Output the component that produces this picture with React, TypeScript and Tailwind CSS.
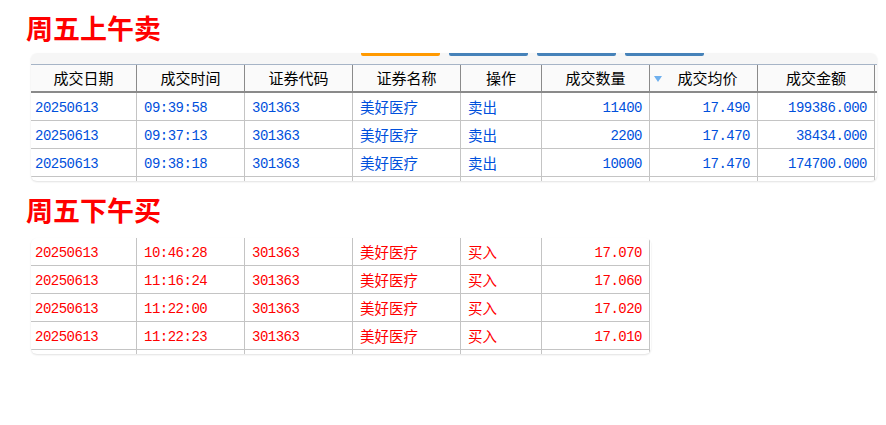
const cjk = { fontFamily: '"Noto Sans CJK SC", "Noto Sans", sans-serif' };
const mono = { fontFamily: '"Liberation Mono", "DejaVu Sans Mono", monospace' };

const cols1 = "grid-cols-[106px_108px_108px_108px_81px_108px_108px_117px]";
const cols2 = "grid-cols-[106px_108px_108px_108px_81px_108px]";

const headers = ["成交日期", "成交时间", "证券代码", "证券名称", "操作", "成交数量", "成交均价", "成交金额"];

type Row = string[];

const sells: Row[] = [
  ["20250613", "09:39:58", "301363", "美好医疗", "卖出", "11400", "17.490", "199386.000"],
  ["20250613", "09:37:13", "301363", "美好医疗", "卖出", "2200", "17.470", "38434.000"],
  ["20250613", "09:38:18", "301363", "美好医疗", "卖出", "10000", "17.470", "174700.000"],
];

const buys: Row[] = [
  ["20250613", "10:46:28", "301363", "美好医疗", "买入", "17.070"],
  ["20250613", "11:16:24", "301363", "美好医疗", "买入", "17.060"],
  ["20250613", "11:22:00", "301363", "美好医疗", "买入", "17.020"],
  ["20250613", "11:22:23", "301363", "美好医疗", "买入", "17.010"],
];

function Title({ text }: { text: string }) {
  return (
    <h1 className="pl-[26px] text-[27px] leading-[27px] font-bold text-[#ff0000]" style={cjk}>
      {text}
    </h1>
  );
}

function Cell({ value, idx, color }: { value: string; idx: number; color: string }) {
  const isCjk = idx === 3 || idx === 4;
  const right = idx >= 5;
  return (
    <div
      className={`h-[28px] border-r border-b border-[#c4c4c4] flex items-center ${color} ${
        right ? "justify-end pr-[7px]" : idx === 0 ? "pl-[4px]" : "pl-[7px]"
      } ${isCjk ? "text-[14.5px] pt-[1px]" : "text-[14px] tracking-[-0.5px] pt-[3px]"}`}
      style={isCjk ? cjk : mono}
    >
      {value}
    </div>
  );
}

function Stub({ n }: { n: number }) {
  return (
    <>
      {Array.from({ length: n }).map((_, i) => (
        <div key={i} className="h-[4px] border-r border-[#c4c4c4]" />
      ))}
    </>
  );
}

export default function App() {
  return (
    <div className="w-[886px] h-[425px] bg-white overflow-hidden pt-[14px]">
      <Title text="周五上午卖" />

      {/* sell table */}
      <div className="mt-[12px] ml-[31px] w-[846px] rounded-[6px] shadow-[0_1px_2px_rgba(0,0,0,0.12)] overflow-hidden bg-white">
        <div className="h-[11px] bg-[#f6f6f6] flex gap-[9px] pl-[330px]">
          <div className="w-[79px] h-[3px] rounded-b-[2px] bg-[#ff9900]" />
          <div className="w-[79px] h-[3px] rounded-b-[2px] bg-[#4682b9]" />
          <div className="w-[79px] h-[3px] rounded-b-[2px] bg-[#4682b9]" />
          <div className="w-[79px] h-[3px] rounded-b-[2px] bg-[#4682b9]" />
        </div>
        <div className={`grid ${cols1} border-t border-[#a6b4c6] border-b-2 border-b-[#8a8a8a] bg-[#fafafa]`}>
          {headers.map((h, i) => (
            <div
              key={h}
              className={`relative h-[26px] border-r border-[#8a8a8a] flex items-center justify-center text-[15px] text-black ${
                i === 6 ? "pl-[8px]" : ""
              }`}
              style={cjk}
            >
              {i === 6 && (
                <svg className="absolute left-[4px] top-[11px]" width="8" height="6" viewBox="0 0 8 6">
                  <path d="M0 0 H8 L4 6 Z" fill="#6fb0ee" />
                </svg>
              )}
              {h}
            </div>
          ))}
        </div>
        <div className={`grid ${cols1}`}>
          {sells.map((r, ri) =>
            r.map((v, i) => <Cell key={`${ri}-${i}`} value={v} idx={i} color="text-[#0050dc]" />)
          )}
          <Stub n={8} />
        </div>
      </div>

      <div className="mt-[15px]">
        <Title text="周五下午买" />
      </div>

      {/* buy table */}
      <div className="mt-[15px] ml-[31px] w-[620px] rounded-[6px] shadow-[0_1px_2px_rgba(0,0,0,0.12)] overflow-hidden bg-white">
        <div className={`grid ${cols2}`}>
          {buys.map((r, ri) =>
            r.map((v, i) => <Cell key={`${ri}-${i}`} value={v} idx={i} color="text-[#ff0000]" />)
          )}
          <Stub n={6} />
        </div>
      </div>
    </div>
  );
}
